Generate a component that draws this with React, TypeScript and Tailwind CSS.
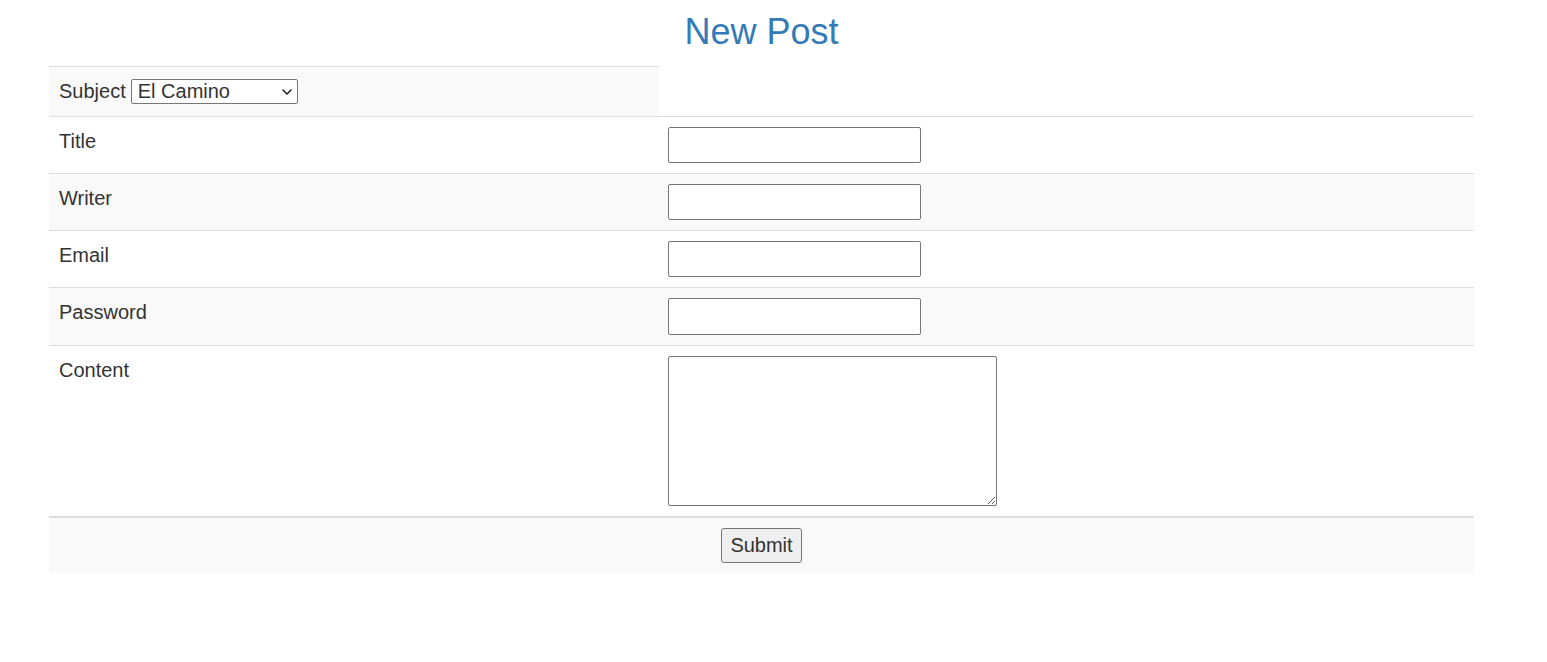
import React from "react";

const font = { fontFamily: '"Liberation Sans", Arial, sans-serif' };

function Row({ label, striped, children }: { label: string; striped?: boolean; children: React.ReactNode }) {
  return (
    <div className={`grid grid-cols-[609px_1fr] border-t border-[#dddddd] ${striped ? "bg-[#f9f9f9]" : "bg-white"}`}>
      <div className="p-[10px] leading-[28.57px]">{label}</div>
      <div className="p-[10px]">{children}</div>
    </div>
  );
}

const inputCls =
  "block w-[253px] h-[36.25px] border border-[#767676] rounded-[2px] bg-white px-[2px] text-[20px] outline-none";

export default function App() {
  return (
    <div className="w-[1547px] min-h-[662px] bg-white text-[#333333] text-[20px]" style={font}>
      <div className="ml-[49px] w-[1425px]">
        <h1 className="h-[66px] pt-[12px] text-center text-[36px] leading-[39.6px] text-[#337ab7] font-normal">
          New Post
        </h1>
        <div className="grid grid-cols-[609px_1fr]">
          <div className="border-t border-[#dddddd] bg-[#f9f9f9] p-[10px] leading-[28.57px] flex items-center">
            <span>Subject</span>
            <div className="relative ml-[5px] inline-block">
              <select
                defaultValue="El Camino"
                className="appearance-none block w-[167px] h-[25px] border border-[#767676] rounded-[2px] bg-white pl-[6px] pr-[24px] text-[20px] leading-[23px] outline-none"
              >
                <option>El Camino</option>
              </select>
              <svg
                className="pointer-events-none absolute right-[6px] top-[10px]"
                width="10"
                height="6"
                viewBox="0 0 10 6"
                fill="none"
              >
                <path d="M1 1L5 5L9 1" stroke="#222" strokeWidth="1.6" strokeLinecap="round" strokeLinejoin="round" />
              </svg>
            </div>
          </div>
          <div />
        </div>
        <Row label="Title">
          <input type="text" className={inputCls} />
        </Row>
        <Row label="Writer" striped>
          <input type="text" className={inputCls} />
        </Row>
        <Row label="Email">
          <input type="text" className={inputCls} />
        </Row>
        <Row label="Password" striped>
          <input type="password" className={inputCls} />
        </Row>
        <Row label="Content">
          <textarea className="block w-[329px] h-[150px] border border-[#767676] rounded-[2px] bg-white text-[20px] resize outline-none" />
        </Row>
        <div className="border-t-2 border-[#dddddd] bg-[#f9f9f9] p-[10px] flex justify-center">
          <button
            type="button"
            className="w-[81px] h-[35px] border border-[#767676] rounded-[3px] bg-[#efefef] text-[20px] leading-[33px] text-[#333333]"
          >
            Submit
          </button>
        </div>
      </div>
    </div>
  );
}
